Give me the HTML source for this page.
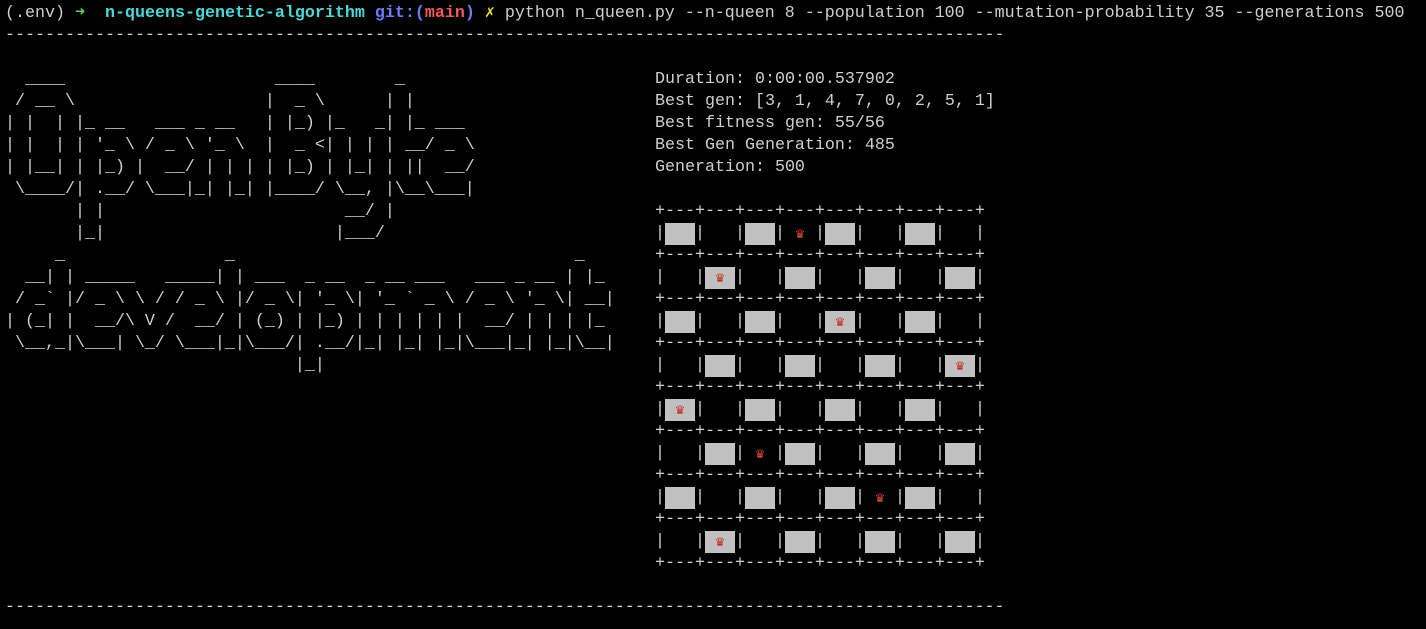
<!DOCTYPE html>
<html><head><meta charset="utf-8">
<style>
html,body{margin:0;padding:0;background:#000;width:1426px;height:629px;overflow:hidden}
pre{margin:0;position:absolute;font-family:"Liberation Mono","DejaVu Sans Mono",monospace;font-size:16.67px;line-height:22px;color:#cfcfcf;white-space:pre}
#cmd{left:5px;top:3px}
.gr{color:#5fd35f}.cy{color:#4fd6d6;font-weight:bold}.bl{color:#6f7bf7;font-weight:bold}.rd{color:#f05a5a;font-weight:bold}.ye{color:#f0e040;font-weight:bold}
#art{left:5px;top:69px}
#right{left:655px;top:69px}
i{display:inline-block;width:30px;height:22px;vertical-align:top;font-style:normal;text-align:center}
i.g{background:#c0c0c0}
i.q{color:#e04a3a;font-family:"DejaVu Sans",sans-serif;font-size:12px;line-height:22px}
i.g.q{color:#c8281c}
</style></head><body>
<pre id="cmd">(.env) <span class="gr">➜</span>  <span class="cy">n-queens-genetic-algorithm</span> <span class="bl">git:(</span><span class="rd">main</span><span class="bl">)</span> <span class="ye">✗</span> python n_queen.py --n-queen 8 --population 100 --mutation-probability 35 --generations 500
----------------------------------------------------------------------------------------------------</pre>
<pre id="art">  ____                     ____        _
 / __ \                   |  _ \      | |
| |  | |_ __   ___ _ __   | |_) |_   _| |_ ___
| |  | | '_ \ / _ \ '_ \  |  _ &lt;| | | | __/ _ \
| |__| | |_) |  __/ | | | | |_) | |_| | ||  __/
 \____/| .__/ \___|_| |_| |____/ \__, |\__\___|
       | |                        __/ |
       |_|                       |___/
     _                _                                  _
  __| | _____   _____| | ___  _ __  _ __ ___   ___ _ __ | |_
 / _` |/ _ \ \ / / _ \ |/ _ \| '_ \| '_ ` _ \ / _ \ '_ \| __|
| (_| |  __/\ V /  __/ | (_) | |_) | | | | | |  __/ | | | |_
 \__,_|\___| \_/ \___|_|\___/| .__/|_| |_| |_|\___|_| |_|\__|
                             |_|</pre>
<pre id="right">Duration: 0:00:00.537902
Best gen: [3, 1, 4, 7, 0, 2, 5, 1]
Best fitness gen: 55/56
Best Gen Generation: 485
Generation: 500

+---+---+---+---+---+---+---+---+
|<i class="g"></i>|<i></i>|<i class="g"></i>|<i class="q">♛</i>|<i class="g"></i>|<i></i>|<i class="g"></i>|<i></i>|
+---+---+---+---+---+---+---+---+
|<i></i>|<i class="g q">♛</i>|<i></i>|<i class="g"></i>|<i></i>|<i class="g"></i>|<i></i>|<i class="g"></i>|
+---+---+---+---+---+---+---+---+
|<i class="g"></i>|<i></i>|<i class="g"></i>|<i></i>|<i class="g q">♛</i>|<i></i>|<i class="g"></i>|<i></i>|
+---+---+---+---+---+---+---+---+
|<i></i>|<i class="g"></i>|<i></i>|<i class="g"></i>|<i></i>|<i class="g"></i>|<i></i>|<i class="g q">♛</i>|
+---+---+---+---+---+---+---+---+
|<i class="g q">♛</i>|<i></i>|<i class="g"></i>|<i></i>|<i class="g"></i>|<i></i>|<i class="g"></i>|<i></i>|
+---+---+---+---+---+---+---+---+
|<i></i>|<i class="g"></i>|<i class="q">♛</i>|<i class="g"></i>|<i></i>|<i class="g"></i>|<i></i>|<i class="g"></i>|
+---+---+---+---+---+---+---+---+
|<i class="g"></i>|<i></i>|<i class="g"></i>|<i></i>|<i class="g"></i>|<i class="q">♛</i>|<i class="g"></i>|<i></i>|
+---+---+---+---+---+---+---+---+
|<i></i>|<i class="g q">♛</i>|<i></i>|<i class="g"></i>|<i></i>|<i class="g"></i>|<i></i>|<i class="g"></i>|
+---+---+---+---+---+---+---+---+</pre>
<pre style="left:5px;top:597px">----------------------------------------------------------------------------------------------------</pre>
</body></html>
